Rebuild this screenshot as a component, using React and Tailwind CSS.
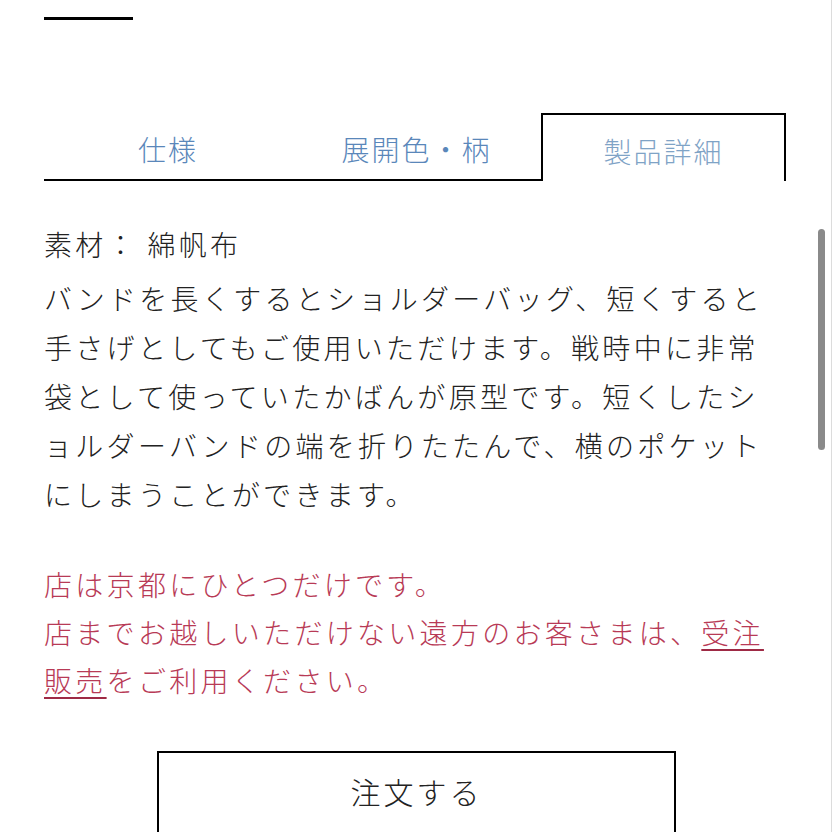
import React from 'react';

const tabs = [
  { label: '仕様', width: 'w-[248px]', active: false },
  { label: '展開色・柄', width: 'w-[249px]', active: false },
  { label: '製品詳細', width: 'w-[245px]', active: true },
];

const App = () => {
  return (
    <div className="relative w-[832px] h-[832px] overflow-hidden bg-white font-['Noto_Sans_CJK_JP',sans-serif] text-[#222]">
      <div className="pl-[44px] pt-[17px]">
        <div className="w-[89px] h-[3px] bg-black" />

        {/* tabs */}
        <div className="mt-[93px] flex">
          {tabs.map((tab) => (
            <div
              key={tab.label}
              className={
                tab.active
                  ? `${tab.width} h-[68px] flex items-center justify-center border-2 border-b-0 border-black text-[28px] tracking-[2px] text-[#7fa3c6] font-light`
                  : `${tab.width} h-[68px] flex items-center justify-center border-b-2 border-black text-[28px] tracking-[2px] text-[#5a87ba] font-light`
              }
            >
              <span className="pt-[6px]">{tab.label}</span>
            </div>
          ))}
        </div>

        {/* details */}
        <div className="mt-[39px] pr-[36px] text-[28px] tracking-[3.3px] leading-[49px] font-light">
          <p>素材： 綿帆布</p>
          <p className="mt-[5px]">
            バンドを長くするとショルダーバッグ、短くすると<br />
            手さげとしてもご使用いただけます。戦時中に非常<br />
            袋として使っていたかばんが原型です。短くしたシ<br />
            ョルダーバンドの端を折りたたんで、横のポケット<br />
            にしまうことができます。
          </p>
          <p className="mt-[41px] leading-[48px] text-[#b83a56]">
            店は京都にひとつだけです。<br />
            店までお越しいただけない遠方のお客さまは、
            <span className="underline decoration-2 underline-offset-[5px] decoration-[#9e2a45]">受注</span>
            <br />
            <span className="underline decoration-2 underline-offset-[5px] decoration-[#9e2a45]">販売</span>
            をご利用ください。
          </p>
        </div>

        <button className="mt-[47px] ml-[113px] w-[519px] h-[100px] border-2 border-black bg-white flex items-start justify-center pt-[16px] text-[30px] tracking-[3px] font-light text-[#222]">
          注文する
        </button>
      </div>

      {/* scrollbar */}
      <div className="absolute left-[818px] top-[229px] w-[7px] h-[221px] rounded-full bg-[#8a8a8a]" />
      <div className="absolute right-0 top-0 w-px h-full bg-[#dcdcdc]" />
    </div>
  );
};

export default App;
